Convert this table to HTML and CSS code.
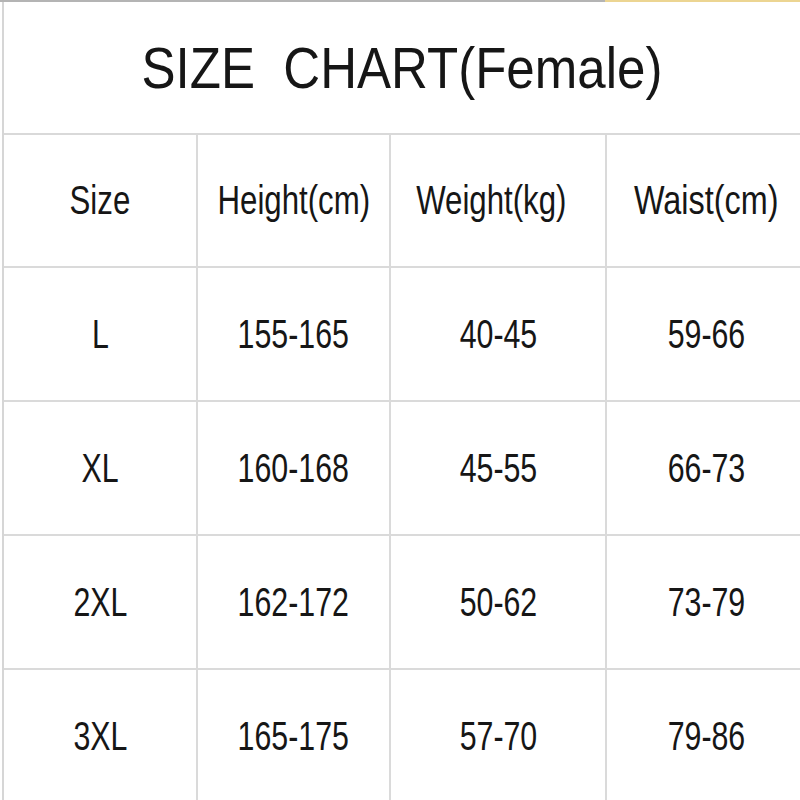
FILE: index.html
```html
<!DOCTYPE html>
<html>
<head>
<meta charset="utf-8">
<link rel="stylesheet" href="styles.css">
</head>
<body>
<div class="page">
  <div class="topline"><div class="grey"></div><div class="gold"></div></div>
  <div class="sheet">
    <div class="title"><span class="t">SIZE  CHART(Female)</span></div>
    <div class="grid">
      <div class="cell head"><span class="h">Size</span></div>
      <div class="cell head"><span class="h">Height(cm)</span></div>
      <div class="cell head"><span class="h shift">Weight(kg)</span></div>
      <div class="cell head"><span class="h wide">Waist(cm)</span></div>

      <div class="cell"><span class="d">L</span></div>
      <div class="cell"><span class="d">155-165</span></div>
      <div class="cell"><span class="d">40-45</span></div>
      <div class="cell"><span class="d">59-66</span></div>

      <div class="cell"><span class="d">XL</span></div>
      <div class="cell"><span class="d">160-168</span></div>
      <div class="cell"><span class="d">45-55</span></div>
      <div class="cell"><span class="d">66-73</span></div>

      <div class="cell"><span class="d">2XL</span></div>
      <div class="cell"><span class="d">162-172</span></div>
      <div class="cell"><span class="d">50-62</span></div>
      <div class="cell"><span class="d">73-79</span></div>

      <div class="cell"><span class="d">3XL</span></div>
      <div class="cell"><span class="d">165-175</span></div>
      <div class="cell"><span class="d">57-70</span></div>
      <div class="cell"><span class="d">79-86</span></div>
    </div>
  </div>
</div>
</body>
</html>
```

FILE: styles.css
```css
html, body {
  margin: 0;
  padding: 0;
  background: #ffffff;
  overflow: hidden;
}
.page {
  width: 806px;
  height: 800px;
  overflow: hidden;
  font-family: "Liberation Sans", Arial, sans-serif;
  color: #161616;
}
.topline {
  display: flex;
  height: 2px;
}
.topline .grey {
  width: 605px;
  background: #b4b4b4;
}
.topline .gold {
  flex: 1;
  background: #ecd592;
}
.sheet {
  margin-left: 2px;
  border-left: 2px solid #d6d6d6;
}
.title {
  height: 131px;
  border-bottom: 2px solid #d9d9d9;
  display: flex;
  align-items: center;
  justify-content: center;
  padding-right: 6px;
}
.t {
  display: inline-block;
  white-space: pre;
  font-size: 58px;
  transform: scaleX(0.88);
}
.grid {
  display: grid;
  grid-template-columns: 194px 193px 216px 200px;
  grid-template-rows: 133px 134px 134px 134px 134px;
}
.cell {
  border-right: 2px solid #dadada;
  border-bottom: 2px solid #dadada;
  display: flex;
  align-items: center;
  justify-content: center;
}
.h {
  display: inline-block;
  white-space: nowrap;
  font-size: 40px;
  transform: scaleX(0.78);
}
.h.shift {
  margin-right: 14px;
}
.h.wide {
  transform: scaleX(0.81);
}
.d {
  display: inline-block;
  white-space: nowrap;
  font-size: 41px;
  transform: scaleX(0.74);
}
```
